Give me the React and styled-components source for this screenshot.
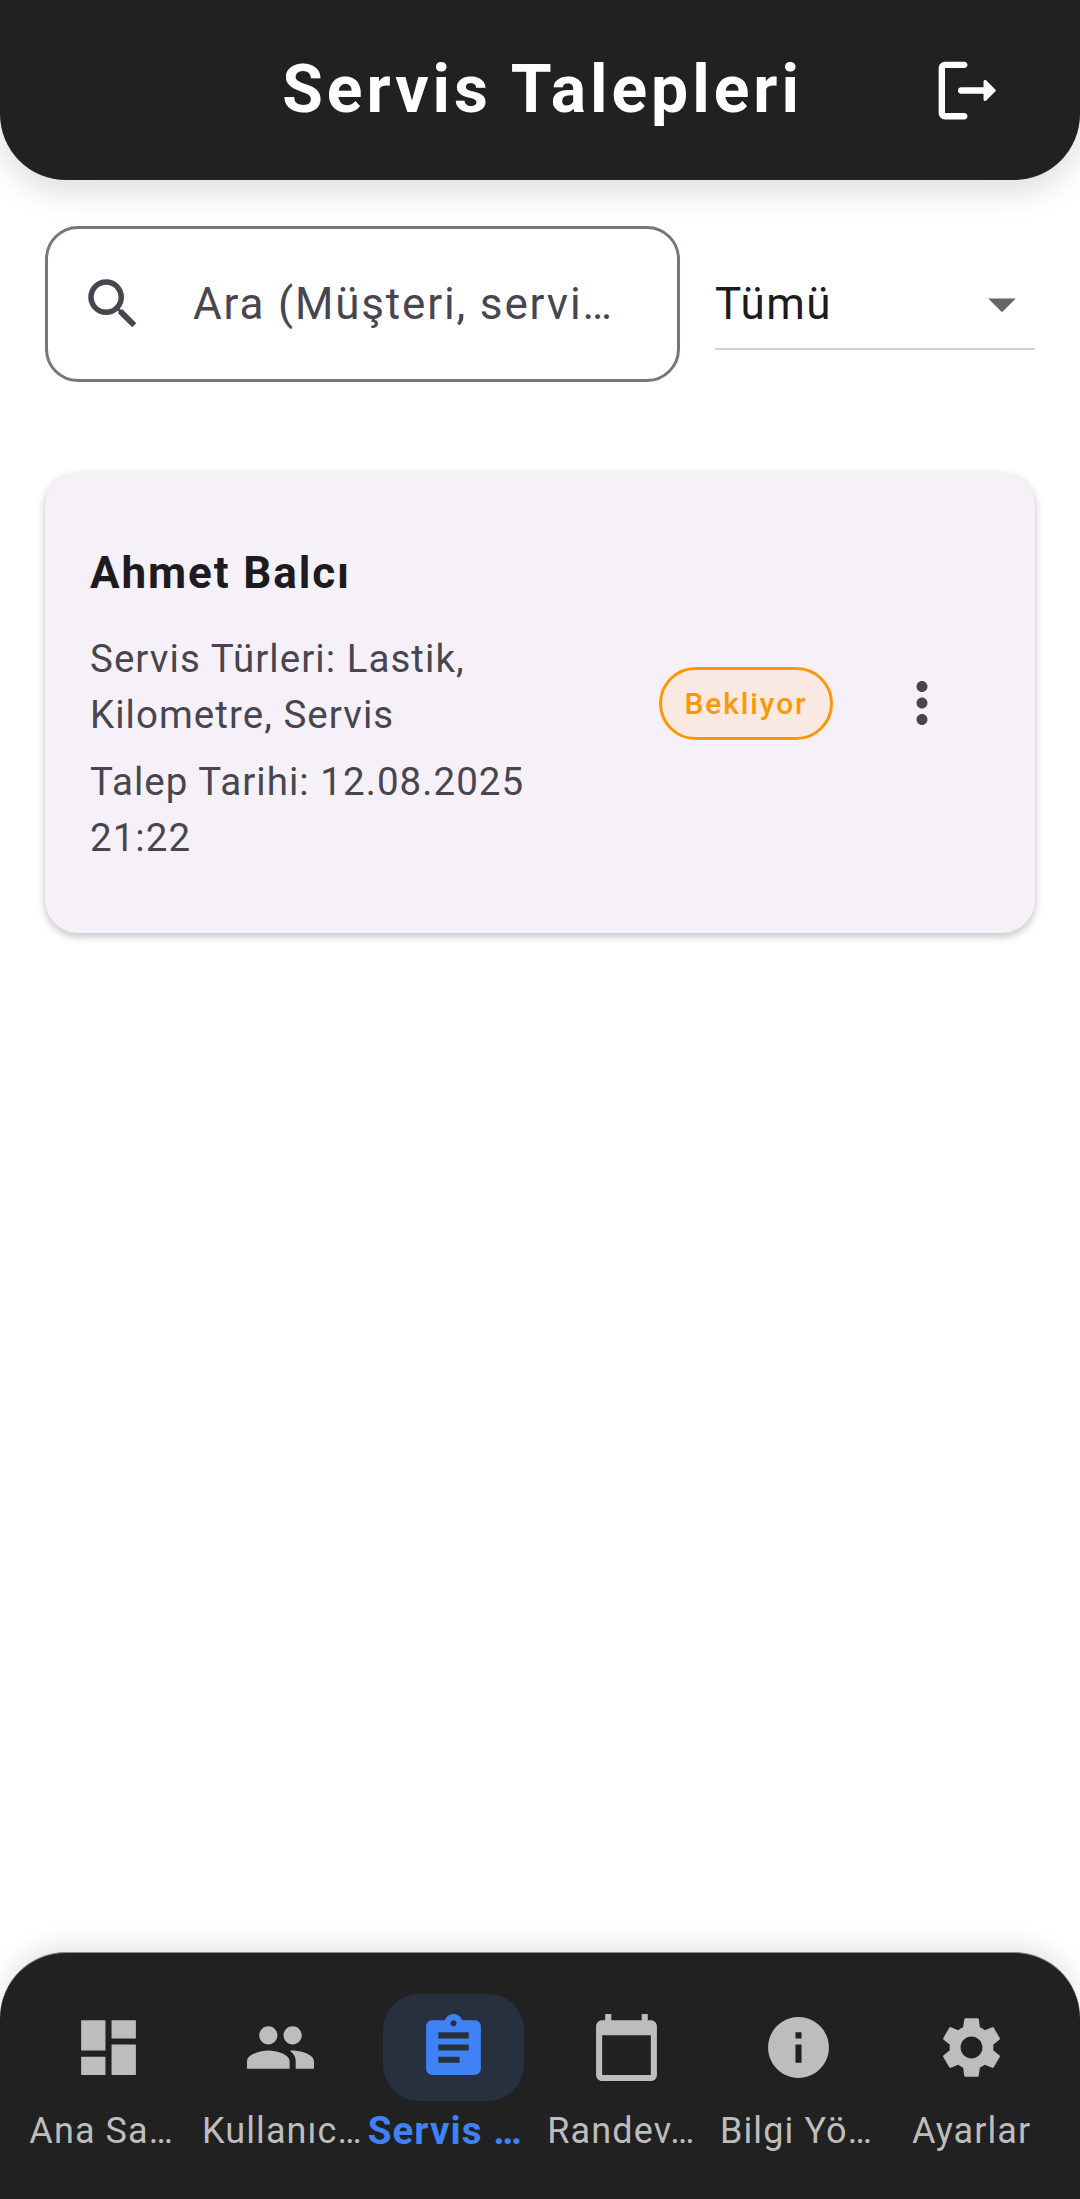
import React from 'react';
import styled, { createGlobalStyle } from 'styled-components';
import {
  MdDashboard,
  MdPeople,
  MdAssignment,
  MdCalendarToday,
  MdInfo,
  MdSettings,
  MdSearch,
  MdMoreVert,
  MdArrowDropDown,
} from 'react-icons/md';

const GlobalStyle = createGlobalStyle`
  html, body {
    margin: 0;
    padding: 0;
    background: #fff;
    font-family: Roboto, "Noto Sans", sans-serif;
  }
  * { box-sizing: border-box; }
`;

const Page = styled.div`
  width: 1080px;
  height: 2199px;
  display: flex;
  flex-direction: column;
  background: #fff;
  overflow: hidden;
`;

const Header = styled.header`
  flex: none;
  height: 180px;
  padding: 0 74px 0 0;
  background: #212121;
  border-radius: 0 0 66px 66px;
  box-shadow: 0 11px 33px rgba(0, 0, 0, 0.14);
  display: flex;
  align-items: center;
  justify-content: flex-end;
  gap: 126px;
`;

const Title = styled.h1`
  margin: 0;
  color: #fff;
  font-size: 66px;
  font-weight: 700;
  letter-spacing: 4px;
  line-height: 1;
`;

const LogoutSvg = styled.svg`
  width: 77px;
  height: 77px;
  flex: none;
  fill: #fff;
`;

const LogoutIcon = () => (
  <LogoutSvg viewBox="0 0 24 24">
    <path d="M5 5h6c.55 0 1-.45 1-1s-.45-1-1-1H5c-1.1 0-2 .9-2 2v14c0 1.1.9 2 2 2h6c.55 0 1-.45 1-1s-.45-1-1-1H5V5z" />
    <path d="M20.65 11.65l-2.79-2.79c-.32-.32-.86-.1-.86.35V11h-7c-.55 0-1 .45-1 1s.45 1 1 1h7v1.79c0 .45.54.67.85.35l2.79-2.79c.2-.19.2-.51.01-.7z" />
  </LogoutSvg>
);

const Main = styled.main`
  flex: 1;
  padding: 46px 45px 0;
`;

const Filters = styled.div`
  display: flex;
  align-items: flex-start;
  gap: 35px;
`;

const SearchBox = styled.div`
  width: 635px;
  height: 156px;
  flex: none;
  border: 3px solid #79747e;
  border-radius: 33px;
  display: flex;
  align-items: center;
  padding-left: 32px;
  gap: 47px;
  color: #49454f;
`;

const SearchIcon = styled(MdSearch)`
  width: 66px;
  height: 66px;
  flex: none;
`;

const Placeholder = styled.span`
  font-size: 44px;
  letter-spacing: 1.85px;
  white-space: nowrap;
`;

const Dropdown = styled.div`
  flex: 1;
  height: 124px;
  padding-top: 33px;
  border-bottom: 2px solid #cfcdd2;
  display: flex;
  align-items: center;
  justify-content: space-between;
  color: #1d1b20;
  font-size: 44px;
  font-weight: 400;
  letter-spacing: 1.4px;
`;

const DropIcon = styled(MdArrowDropDown)`
  width: 66px;
  height: 66px;
  color: #666;
`;

const Card = styled.article`
  margin-top: 91px;
  height: 460px;
  background: #f6f1f9;
  border-radius: 33px;
  box-shadow: 0 3px 8px rgba(0, 0, 0, 0.26);
  padding: 0 64px 0 45px;
  display: flex;
  align-items: center;
`;

const CardBody = styled.div`
  width: 520px;
  flex: none;
  padding-top: 15px;
`;

const Name = styled.h2`
  margin: 0 0 29px;
  color: #1d1b20;
  font-size: 44px;
  font-weight: 700;
  letter-spacing: 1.9px;
  line-height: 58px;
`;

const Detail = styled.p`
  margin: 0 0 11px;
  color: #49454f;
  font-size: 38.5px;
  letter-spacing: 1.05px;
  line-height: 56px;
`;

const Badge = styled.span`
  flex: none;
  margin-left: 49px;
  height: 73px;
  width: 174px;
  border: 3px solid #ff9800;
  border-radius: 37px;
  background: #f9e9e2;
  color: #ff9800;
  font-size: 30px;
  font-weight: 500;
  letter-spacing: 1.9px;
  display: flex;
  align-items: center;
  justify-content: center;
`;

const MoreIcon = styled(MdMoreVert)`
  flex: none;
  width: 66px;
  height: 66px;
  margin-left: 56px;
  color: #49454f;
`;

const Nav = styled.nav`
  flex: none;
  height: 247px;
  background: #212121;
  border-radius: 66px 66px 0 0;
  border-top: 1px solid #8a8a8a;
  box-shadow: 0 -8px 24px rgba(0, 0, 0, 0.1);
  padding: 41px 22px 0;
  display: grid;
  grid-template-columns: repeat(6, 1fr);
`;

const NavItem = styled.div`
  display: flex;
  flex-direction: column;
  align-items: center;
  color: ${(p) => (p.$active ? '#3f82f6' : '#bdbdbd')};
`;

const IconWrap = styled.div`
  width: 141px;
  height: 107px;
  border-radius: 36px;
  display: flex;
  align-items: center;
  justify-content: center;
  background: ${(p) => (p.$active ? '#26303f' : 'transparent')};
  svg {
    width: 73px;
    height: 73px;
  }
`;

// cut-off labels start at the left of their box, whole ones are centred
const NavLabel = styled.span`
  margin-top: 8px;
  width: ${(p) => (p.$active ? '172px' : '158px')};
  text-align: ${(p) => (p.$whole ? 'center' : 'left')};
  font-size: ${(p) => (p.$active ? '38.5px' : '36px')};
  font-weight: ${(p) => (p.$active ? 700 : 400)};
  letter-spacing: 1.1px;
  line-height: 44px;
  white-space: nowrap;
`;

const navItems = [
  { label: 'Ana Sa…', icon: MdDashboard },
  { label: 'Kullanıc…', icon: MdPeople },
  { label: 'Servis …', icon: MdAssignment, active: true },
  { label: 'Randev…', icon: MdCalendarToday },
  { label: 'Bilgi Yö…', icon: MdInfo },
  { label: 'Ayarlar', icon: MdSettings, whole: true },
];

export default function App() {
  return (
    <Page>
      <GlobalStyle />
      <Header>
        <Title>Servis Talepleri</Title>
        <LogoutIcon />
      </Header>
      <Main>
        <Filters>
          <SearchBox>
            <SearchIcon />
            <Placeholder>Ara (Müşteri, servi…</Placeholder>
          </SearchBox>
          <Dropdown>
            Tümü
            <DropIcon />
          </Dropdown>
        </Filters>
        <Card>
          <CardBody>
            <Name>Ahmet Balcı</Name>
            <Detail>Servis Türleri: Lastik, Kilometre, Servis</Detail>
            <Detail>Talep Tarihi: 12.08.2025 21:22</Detail>
          </CardBody>
          <Badge>Bekliyor</Badge>
          <MoreIcon />
        </Card>
      </Main>
      <Nav>
        {navItems.map(({ label, icon: Icon, active, whole }) => (
          <NavItem key={label} $active={active}>
            <IconWrap $active={active}>
              <Icon />
            </IconWrap>
            <NavLabel $active={active} $whole={whole}>{label}</NavLabel>
          </NavItem>
        ))}
      </Nav>
    </Page>
  );
}
